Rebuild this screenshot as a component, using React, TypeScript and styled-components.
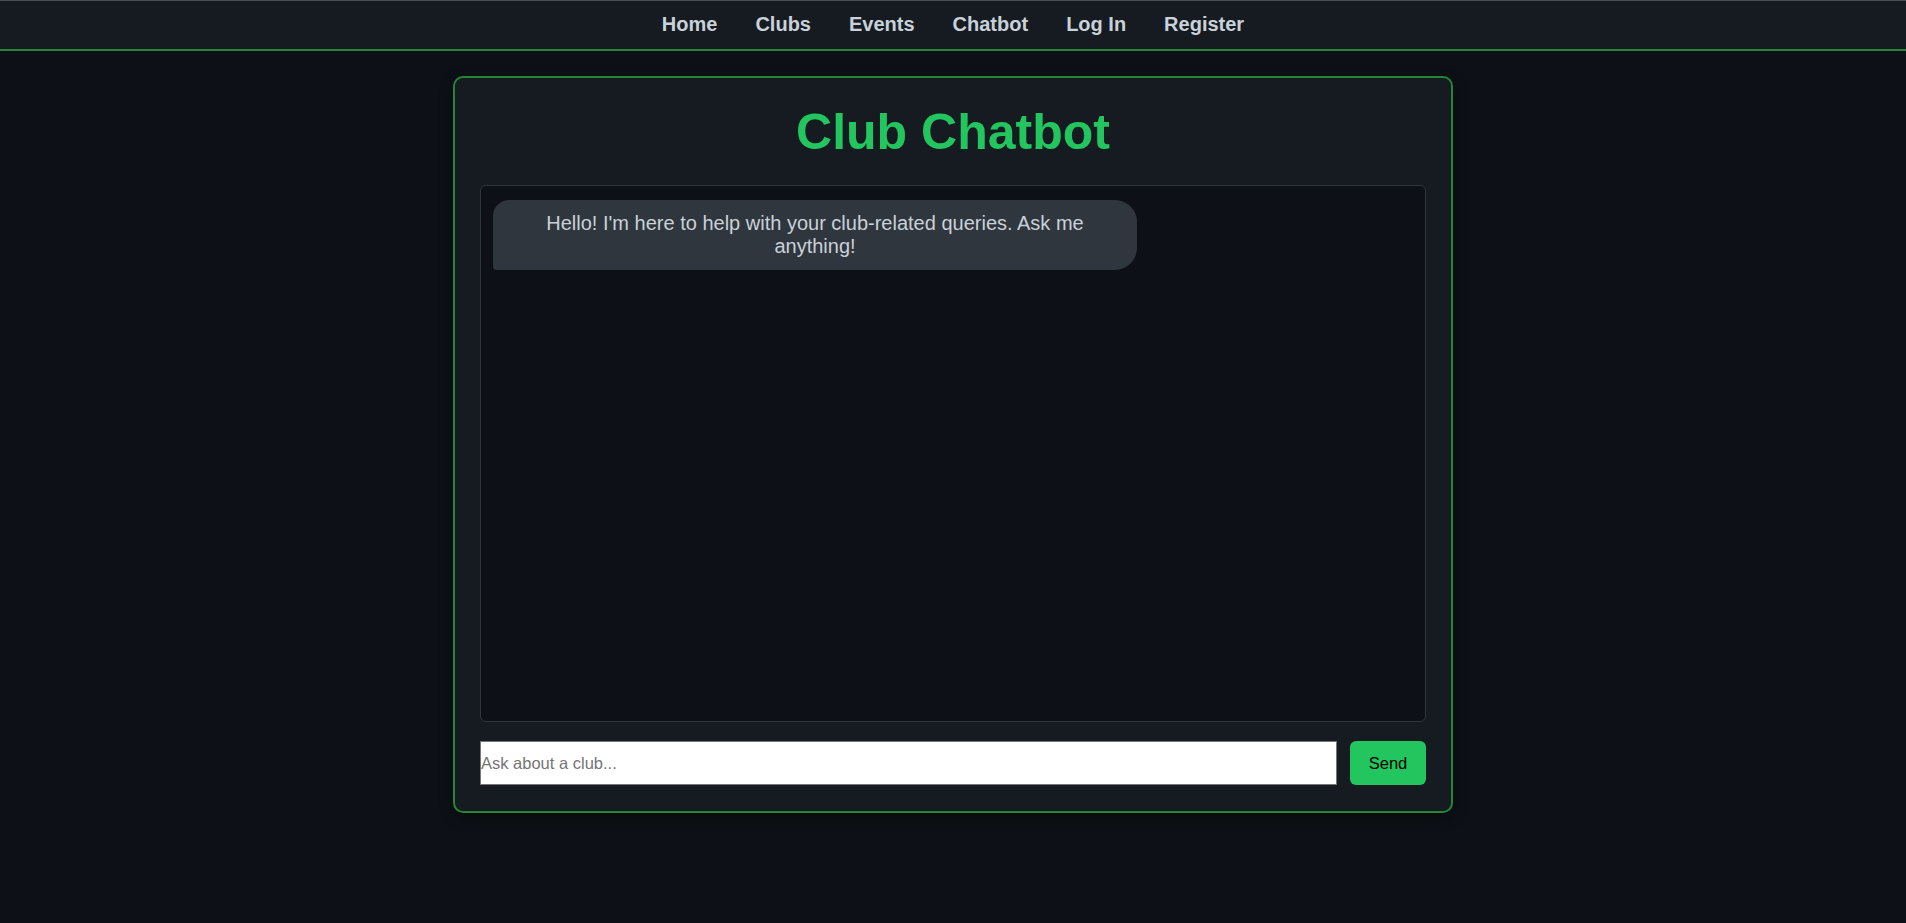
import React, { useState } from "react";
import styled, { createGlobalStyle } from "styled-components";

const GlobalStyle = createGlobalStyle`
    html, body {
        margin: 0;
        padding: 0;
        background: #0d1117;
        font-family: "Liberation Sans", Arial, sans-serif;
    }
    #root {
        min-height: 100vh;
        background: #0d1117;
    }
`;

const NavBar = styled.nav`
    display: flex;
    justify-content: center;
    gap: 38px;
    background: #161b22;
    border-top: 1px solid #4a4e54;
    border-bottom: 2px solid #238636;
    padding: 12px 0 13px;
`;

const NavLink = styled.a`
    color: #c9d1d9;
    font-size: 20px;
    font-weight: 700;
    line-height: 23px;
    text-decoration: none;
    cursor: pointer;
    &:hover {
        color: #22c55e;
    }
`;

const Card = styled.main`
    box-sizing: border-box;
    width: 1000px;
    margin: 25px auto 0;
    padding: 25px 25px 26px;
    background: #161b22;
    border: 2px solid #238636;
    border-radius: 10px;
    box-shadow: 0 4px 14px rgba(0, 0, 0, 0.45);
`;

const Title = styled.h1`
    margin: 0 0 24px;
    color: #22c55e;
    font-size: 50px;
    font-weight: 700;
    text-align: center;
`;

const ChatBox = styled.div`
    box-sizing: border-box;
    height: 537px;
    padding: 14px 12px 12px;
    background: #0d1117;
    border: 1px solid #30363d;
    border-radius: 6px;
    overflow-y: auto;
    display: flex;
    flex-direction: column;
    gap: 10px;
`;

const Bubble = styled.div<{ $fromUser?: boolean }>`
    max-width: 70%;
    box-sizing: border-box;
    align-self: ${(p) => (p.$fromUser ? "flex-end" : "flex-start")};
    padding: 12px 16px;
    background: ${(p) => (p.$fromUser ? "#238636" : "#30363d")};
    color: #c9d1d9;
    font-size: 20px;
    line-height: 23px;
    text-align: center;
    border-radius: 16px 22px 22px 4px;
`;

const InputRow = styled.form`
    display: flex;
    gap: 13px;
    margin-top: 19px;
`;

const TextInput = styled.input`
    flex: 1;
    height: 44px;
    box-sizing: border-box;
    padding: 0;
    border: 1px solid #767676;
    background: #fff;
    font-family: "Liberation Sans", Arial, sans-serif;
    font-size: 16.5px;
    color: #000;
    outline: none;
    &::placeholder {
        color: #757575;
    }
`;

const SendButton = styled.button`
    width: 76px;
    height: 44px;
    border: none;
    border-radius: 6px;
    background: #22c55e;
    color: #000;
    font-family: "Liberation Sans", Arial, sans-serif;
    font-size: 16.5px;
    cursor: pointer;
    &:hover {
        background: #1fae53;
    }
`;

const links = ["Home", "Clubs", "Events", "Chatbot", "Log In", "Register"];

interface IMessage {
    text: string;
    fromUser: boolean;
}

export default function App() {
    const [messages, setMessages] = useState<IMessage[]>([
        { text: "Hello! I'm here to help with your club-related queries. Ask me anything!", fromUser: false },
    ]);
    const [draft, setDraft] = useState("");

    return (
        <>
            <GlobalStyle />
            <NavBar>
                {links.map((l) => (
                    <NavLink key={l}>{l}</NavLink>
                ))}
            </NavBar>
            <Card>
                <Title>Club Chatbot</Title>
                <ChatBox>
                    {messages.map((m, i) => (
                        <Bubble key={i} $fromUser={m.fromUser}>
                            {m.text}
                        </Bubble>
                    ))}
                </ChatBox>
                <InputRow
                    onSubmit={(e) => {
                        e.preventDefault();
                        if (draft.trim() === "") return;
                        setMessages([...messages, { text: draft, fromUser: true }]);
                        setDraft("");
                    }}
                >
                    <TextInput
                        type="text"
                        placeholder="Ask about a club..."
                        value={draft}
                        onChange={(e) => setDraft(e.target.value)}
                    />
                    <SendButton type="submit">Send</SendButton>
                </InputRow>
            </Card>
        </>
    );
}
